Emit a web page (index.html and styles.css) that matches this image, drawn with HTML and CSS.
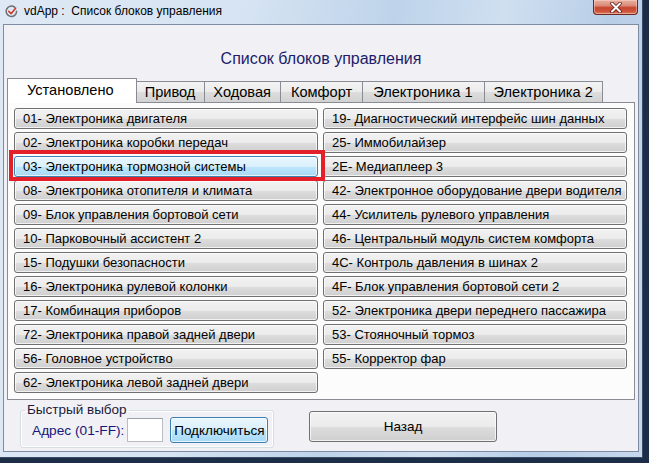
FILE: index.html
```html
<!DOCTYPE html>
<html lang="ru">
<head>
<meta charset="utf-8">
<title>vdApp</title>
<link rel="stylesheet" href="styles.css">
</head>
<body>
<div class="window">
  <div class="titlebar">
    <svg class="app-icon" width="13" height="13" viewBox="0 0 13 13">
      <path d="M9.6 2.2 A5.2 5.2 0 1 0 11.6 6.2" fill="none" stroke="#6d6f73" stroke-width="1.5" stroke-linecap="round"/>
      <path d="M3.8 6.4 L6.1 8.7 L10.6 3.2" fill="none" stroke="#d2382a" stroke-width="1.6" stroke-linecap="round" stroke-linejoin="round"/>
    </svg>
    <span class="title-text">vdApp :&nbsp; Список блоков управления</span>
    <div class="close-btn">
      <svg width="16" height="11" viewBox="0 0 16 11">
        <path d="M4 1.5 L12 9.5 M12 1.5 L4 9.5" stroke="#5b2018" stroke-width="3.6" stroke-linecap="round"/>
        <path d="M4 1.5 L12 9.5 M12 1.5 L4 9.5" stroke="#ffffff" stroke-width="2" stroke-linecap="round"/>
      </svg>
    </div>
  </div>
  <div class="client">
    <div class="heading">Список блоков управления</div>
    <div class="tabs">
      <div class="tab tab-active">Установлено</div>
      <div class="tab">Привод</div>
      <div class="tab">Ходовая</div>
      <div class="tab tab-comfort">Комфорт</div>
      <div class="tab tab-e1">Электроника 1</div>
      <div class="tab tab-e2">Электроника 2</div>
    </div>
    <div class="panel">
      <div class="grid">
        <div class="btn">01- Электроника двигателя</div>
        <div class="btn">02- Электроника коробки передач</div>
        <div class="btn btn-hot marked">03- Электроника тормозной системы</div>
        <div class="btn">08- Электроника отопителя и климата</div>
        <div class="btn">09- Блок управления бортовой сети</div>
        <div class="btn">10- Парковочный ассистент 2</div>
        <div class="btn">15- Подушки безопасности</div>
        <div class="btn">16- Электроника рулевой колонки</div>
        <div class="btn">17- Комбинация приборов</div>
        <div class="btn">72- Электроника правой задней двери</div>
        <div class="btn">56- Головное устройство</div>
        <div class="btn">62- Электроника левой задней двери</div>
        <div class="btn">19- Диагностический интерфейс шин данных</div>
        <div class="btn">25- Иммобилайзер</div>
        <div class="btn">2E- Медиаплеер 3</div>
        <div class="btn">42- Электронное оборудование двери водителя</div>
        <div class="btn">44- Усилитель рулевого управления</div>
        <div class="btn">46- Центральный модуль систем комфорта</div>
        <div class="btn">4C- Контроль давления в шинах 2</div>
        <div class="btn">4F- Блок управления бортовой сети 2</div>
        <div class="btn">52- Электроника двери переднего пассажира</div>
        <div class="btn">53- Стояночный тормоз</div>
        <div class="btn">55- Корректор фар</div>
      </div>
    </div>
    <div class="bottom">
      <fieldset class="quick">
        <legend>Быстрый выбор</legend>
        <span class="addr-label">Адрес (01-FF):</span>
        <div class="addr-input"></div>
        <div class="btn btn-hot connect">Подключиться</div>
      </fieldset>
      <div class="btn back">Назад</div>
    </div>
  </div>
</div>
</body>
</html>
```

FILE: styles.css
```css
* { box-sizing: border-box; }
html, body { margin: 0; padding: 0; }
body {
  background: #1c2d47;
  width: 649px;
  height: 463px;
  overflow: hidden;
  font-family: "Liberation Sans", Arial, sans-serif;
}
.window {
  width: 643px;
  height: 458px;
  padding: 0 3px 5px 3px;
  background: linear-gradient(100deg, #dfe9f5 0%, #d5e3f2 35%, #bed3ea 55%, #cfdff0 70%, #b8cee7 85%, #c6d8ec 100%);
  border-right: 1px solid #3a4c66;
  border-bottom: 1px solid #3a4c66;
  display: flex;
  flex-direction: column;
}
.titlebar {
  height: 24px;
  display: flex;
  align-items: center;
  padding-left: 2px;
}
.app-icon { margin-top: -2px; }
.title-text {
  margin-left: 6px;
  font-size: 12px;
  color: #000;
  margin-top: -3px;
}
.close-btn {
  margin-left: auto;
  margin-right: 1px;
  align-self: flex-start;
  width: 45px;
  height: 15px;
  border: 1px solid #6a2a20;
  border-top: none;
  border-radius: 0 0 4px 4px;
  background: linear-gradient(#eab2a4 0%, #dc8a77 40%, #c8452f 55%, #d0583f 85%, #e0866c 100%);
  display: flex;
  align-items: center;
  justify-content: center;
  box-shadow: inset 0 0 0 1px rgba(255,220,210,0.45);
}
.client {
  flex: 1;
  background: #f0f0f5;
  border: 1px solid #7d8ca0;
  display: flex;
  flex-direction: column;
}
.heading {
  padding-top: 23px;
  height: 45px;
  line-height: 22px;
  text-align: center;
  font-size: 16px;
  color: #1c1c6a;
  margin-bottom: 8px;
}
.tabs {
  display: flex;
  align-items: flex-end;
  height: 24px;
  margin-left: 3px;
  position: relative;
  z-index: 1;
}
.tab {
  height: 21px;
  padding: 0 9px 0 8px;
  font-size: 14.6px;
  line-height: 20px;
  border: 1px solid #898c95;
  border-bottom: none;
  margin-left: -1px;
  background: linear-gradient(#f3f3f3 0%, #ebebeb 50%, #dddddd 51%, #d2d2d2 100%);
  color: #000;
  white-space: nowrap;
}
.tab-comfort { padding: 0 10px 0 10px; }
.tab-e1 { padding: 0 11px 0 10px; }
.tab-e2 { padding: 0 9px 0 9px; }
.tab-active {
  margin-left: 0;
  height: 25px;
  margin-bottom: -1px;
  padding: 0 22px 0 19px;
  line-height: 22px;
  background: #ffffff;
}
.panel {
  margin: 0 3px;
  height: 298px;
  border: 1px solid #898c95;
  background: #fcfcfc;
  padding: 5px 7px 6px 6px;
}
.grid {
  display: grid;
  grid-template-columns: 304px 304px;
  grid-template-rows: repeat(12, 21px);
  grid-auto-flow: column;
  column-gap: 5px;
  row-gap: 3px;
}
.btn {
  height: 21px;
  border: 1px solid #707070;
  border-radius: 3px;
  background: linear-gradient(#f2f2f2 0%, #ebebeb 50%, #dddddd 51%, #cfcfcf 100%);
  box-shadow: inset 0 0 0 1px rgba(255,255,255,0.7);
  font-size: 13px;
  color: #000;
  display: flex;
  align-items: center;
  padding-left: 8px;
  white-space: nowrap;
}
.btn-hot {
  border-color: #3c7fb1;
  background: linear-gradient(#eaf6fd 0%, #d9f0fc 50%, #bee6fd 51%, #a7d9f5 100%);
}
.marked { position: relative; }
.marked::after {
  content: "";
  position: absolute;
  top: -7px;
  left: -6px;
  right: -8px;
  bottom: -5px;
  border: 4px solid #e3202a;
}
.bottom {
  flex: 1;
  display: flex;
  align-items: flex-start;
  padding-left: 16px;
}
.quick {
  margin: 3px 0 0 0;
  width: 254px;
  height: 45px;
  border: 1px solid #d5dfe5;
  border-radius: 3px;
  padding: 0 4px 0 11px;
  display: flex;
  align-items: center;
  box-shadow: inset 0 0 0 1px #ffffff;
  white-space: nowrap;
}
.quick legend {
  font-size: 13.5px;
  color: #1a1a3a;
  padding: 0 2px;
  margin-left: -7px;
  line-height: 14px;
}
.addr-label {
  font-size: 13.7px;
  color: #17177a;
  margin-top: -4px;
  flex-shrink: 0;
  white-space: nowrap;
}
.addr-input {
  flex-shrink: 0;
  width: 36px;
  height: 24px;
  margin-left: 3px;
  margin-top: -4px;
  background: #ffffff;
  border: 1px solid #b8bcc6;
  border-top-color: #9aa0ab;
}
.connect {
  flex-shrink: 0;
  width: 98px;
  height: 26px;
  margin-left: 7px;
  margin-top: -4px;
  padding: 0;
  justify-content: center;
  font-size: 13.5px;
}
.back {
  width: 188px;
  height: 31px;
  margin-left: 35px;
  margin-top: 11px;
  padding: 0;
  justify-content: center;
  font-size: 13.5px;
}
```
